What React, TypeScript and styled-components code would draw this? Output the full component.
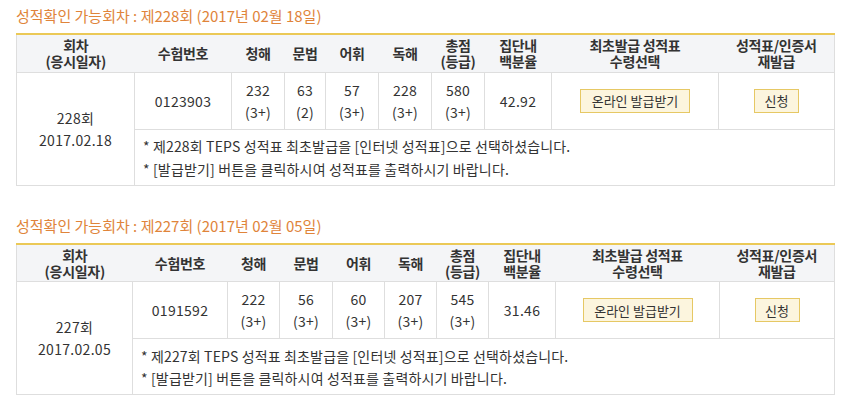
import React from "react";
import styled, { createGlobalStyle } from "styled-components";

const Global = createGlobalStyle`
  html, body { margin: 0; padding: 0; background: #fff; }
  body { font-family: "Noto Sans CJK KR", "Noto Sans", sans-serif; color: #333; }
`;

const Page = styled.div`
  padding: 0 14px 0 16px;
  width: 818px;
`;

const Section = styled.section`
  margin-bottom: 24px;
`;

const Title = styled.h3`
  margin: 0;
  height: 33px;
  line-height: 32px;
  font-size: 15px;
  font-weight: 400;
  color: #e0843a;
  letter-spacing: 0;
`;

const Table = styled.table`
  width: 818px;
  table-layout: fixed;
  border-collapse: collapse;
  border-top: 2px solid #ebc957;
  font-size: 14px;
  color: #333;
`;

const HeadRow = styled.tr`
  height: 38px;
  background: #f4f5f7;
`;

const Th = styled.th<{ $first?: boolean; $last?: boolean }>`
  border-bottom: 1px solid #dedede;
  border-left: ${(p) => (p.$first ? "1px solid #dedede" : "none")};
  border-right: ${(p) => (p.$last ? "1px solid #dedede" : "none")};
  font-weight: 700;
  font-size: 14px;
  line-height: 16px;
  padding: 0;
  text-align: center;
  letter-spacing: -0.3px;
  color: #333;
`;

const DataRow = styled.tr`
  height: 57px;
`;

const NoteRow = styled.tr`
  height: 56px;
`;

const Td = styled.td<{ $last?: boolean }>`
  border: 1px solid #dedede;
  border-right: ${(p) => (p.$last ? "1px solid #dedede" : "none")};
  padding: 0;
  text-align: center;
  vertical-align: middle;
  line-height: 22px;
  font-size: 14px;
  letter-spacing: 0.3px;
`;

const NoteCell = styled.td`
  border: 1px solid #dedede;
  padding: 1px 0 0 8px;
  text-align: left;
  line-height: 22.5px;
  font-size: 14px;
  letter-spacing: 0.15px;
`;

const Btn = styled.button<{ $w: number }>`
  width: ${(p) => p.$w}px;
  height: 24px;
  background: #fcf5de;
  border: 1px solid #e6c864;
  padding: 0;
  font-family: inherit;
  font-size: 13px;
  color: #333;
  letter-spacing: 0;
  cursor: pointer;
`;

type Round = {
  round: string;
  date: string;
  titleDate: string;
  id: string;
  scores: [string, string][];
  total: [string, string];
  pct: string;
  cols: number[];
};

const data: Round[] = [
  {
    round: "228",
    date: "2017.02.18",
    titleDate: "2017년 02월 18일",
    id: "0123903",
    scores: [["232", "(3+)"], ["63", "(2)"], ["57", "(3+)"], ["228", "(3+)"]],
    total: ["580", "(3+)"],
    pct: "42.92",
    cols: [118, 97, 53, 41, 53, 53, 53, 67, 167, 116],
  },
  {
    round: "227",
    date: "2017.02.05",
    titleDate: "2017년 02월 05일",
    id: "0191592",
    scores: [["222", "(3+)"], ["56", "(3+)"], ["60", "(3+)"], ["207", "(3+)"]],
    total: ["545", "(3+)"],
    pct: "31.46",
    cols: [116, 95, 52, 53, 52, 52, 52, 67, 164, 115],
  },
];

function ScoreTable({ r }: { r: Round }) {
  return (
    <Section>
      <Title>성적확인 가능회차 : 제{r.round}회 ({r.titleDate})</Title>
      <Table>
        <colgroup>
          {r.cols.map((w, i) => (
            <col key={i} style={{ width: w }} />
          ))}
        </colgroup>
        <thead>
          <HeadRow>
            <Th $first>회차<br />(응시일자)</Th>
            <Th>수험번호</Th>
            <Th>청해</Th>
            <Th>문법</Th>
            <Th>어휘</Th>
            <Th>독해</Th>
            <Th>총점<br />(등급)</Th>
            <Th>집단내<br />백분율</Th>
            <Th>최초발급 성적표<br />수령선택</Th>
            <Th $last>성적표/인증서<br />재발급</Th>
          </HeadRow>
        </thead>
        <tbody>
          <DataRow>
            <Td rowSpan={2}>{r.round}회<br />{r.date}</Td>
            <Td>{r.id}</Td>
            {r.scores.map(([a, b], i) => (
              <Td key={i}>{a}<br />{b}</Td>
            ))}
            <Td>{r.total[0]}<br />{r.total[1]}</Td>
            <Td>{r.pct}</Td>
            <Td><Btn $w={110}>온라인 발급받기</Btn></Td>
            <Td $last><Btn $w={45}>신청</Btn></Td>
          </DataRow>
          <NoteRow>
            <NoteCell colSpan={9}>
              * 제{r.round}회 TEPS 성적표 최초발급을 [인터넷 성적표]으로 선택하셨습니다.<br />
              * [발급받기] 버튼을 클릭하시여 성적표를 출력하시기 바랍니다.
            </NoteCell>
          </NoteRow>
        </tbody>
      </Table>
    </Section>
  );
}

export default function App() {
  return (
    <>
      <Global />
      <Page>
        {data.map((r) => (
          <ScoreTable key={r.round} r={r} />
        ))}
      </Page>
    </>
  );
}
